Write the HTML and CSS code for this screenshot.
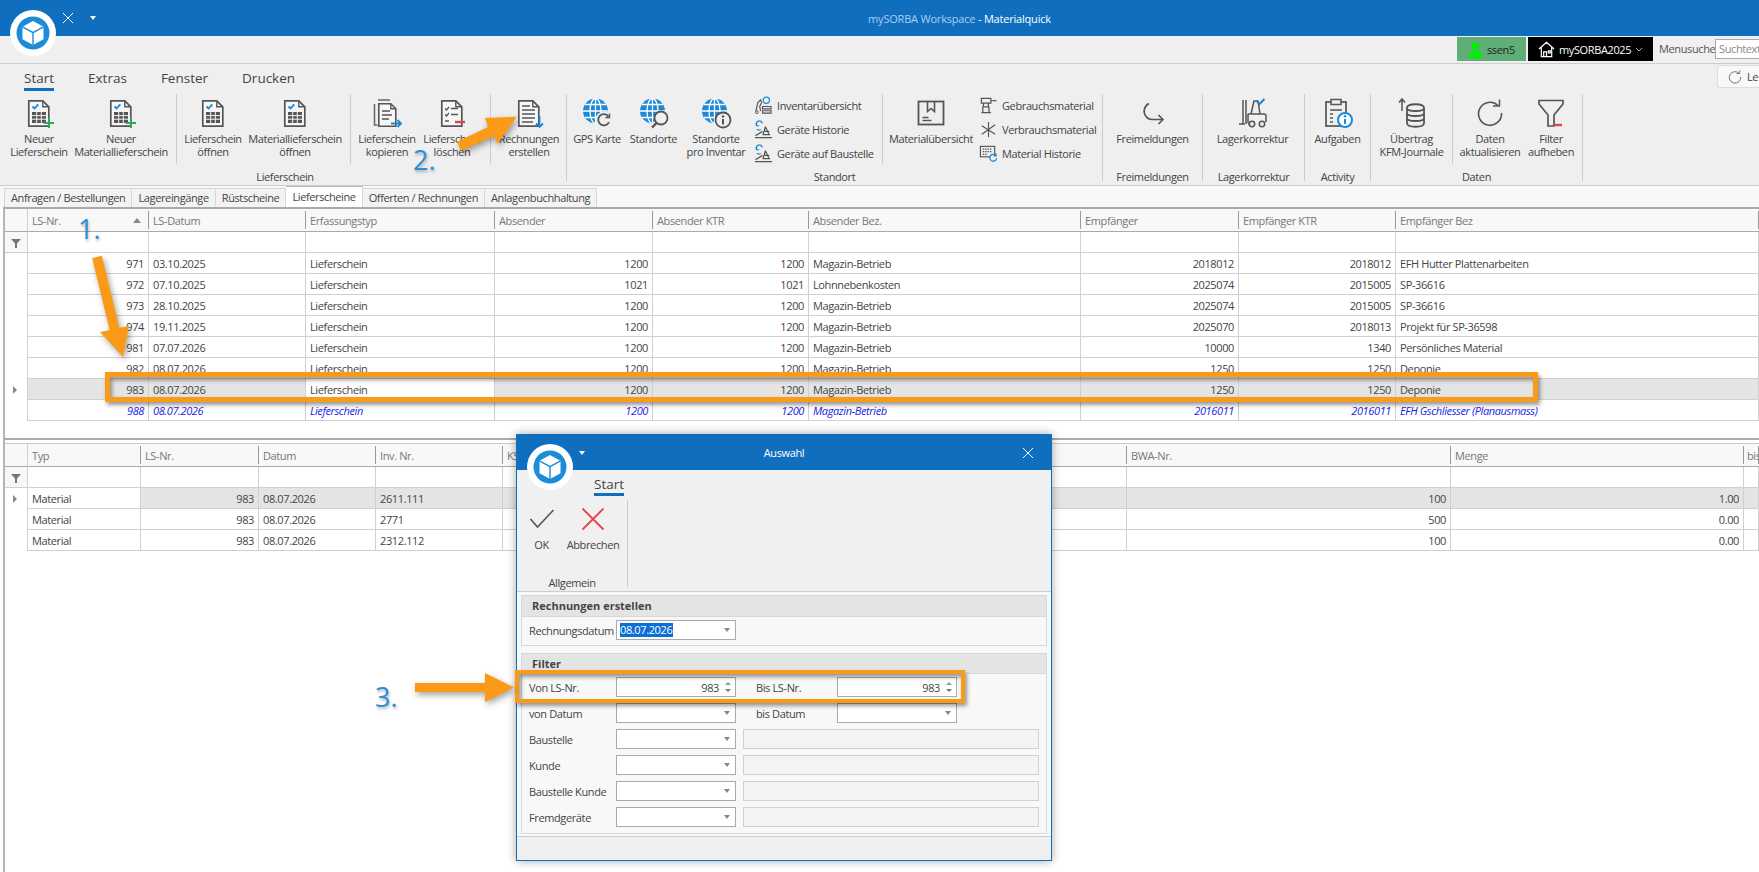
FILE: index.html
```html
<!DOCTYPE html>
<html lang="de">
<head>
    <meta charset="UTF-8">
    <meta name="viewport" content="width=device-width, initial-scale=1.0">
    <title>mySORBA Workspace - Materialquick</title>
    <link rel="stylesheet" href="styles.css">
</head>
<body>
    <svg class="sprite" xmlns="http://www.w3.org/2000/svg">
        <symbol id="logo" viewBox="0 0 46 46">
            <circle cx="23" cy="23" r="23" fill="#fff"/>
            <circle cx="23" cy="23" r="16.5" fill="#1c8bd8"/>
            <path d="M23 11l10.5 5.8v12.4L23 35l-10.5-5.8V16.8z" fill="#fff"/>
            <path d="M12.5 16.8L23 22.6l10.5-5.8M23 22.6V35" fill="none" stroke="#1c8bd8" stroke-width="1.4"/>
        </symbol>
        <symbol id="doc" viewBox="0 0 32 32">
            <path d="M5.8 3.8h14l6 6v19.4h-20z" fill="#f6f6f6" stroke="#555" stroke-width="1.7"/>
            <path d="M19.8 3.8v6h6" fill="none" stroke="#555" stroke-width="1.4"/>
        </symbol>
        <symbol id="doc-grid" viewBox="0 0 32 32">
            <use href="#doc"/>
            <path d="M9.5 9.5l2 2 3.8-4.2" fill="none" stroke="#1d86cf" stroke-width="1.8"/>
            <rect x="9" y="15" width="14" height="11" fill="#555"/>
            <path d="M9 18.6h14M9 22.2h14M13.7 15v11M18.3 15v11" stroke="#f6f6f6"/>
        </symbol>
        <symbol id="doc-grid-plus" viewBox="0 0 32 32">
            <use href="#doc-grid"/>
            <path d="M26 21v10M21 26h10" stroke="#2fa84f" stroke-width="2"/>
        </symbol>
        <symbol id="doc-copy" viewBox="0 0 32 32">
            <path d="M3.5 7v21h3M7 3h12" fill="none" stroke="#666" stroke-width="1.5"/>
            <path d="M7.8 6.8h12l5 5v17.4h-17z" fill="#f6f6f6" stroke="#555" stroke-width="1.6"/>
            <path d="M19.8 6.8v5h5M11 14h8M11 18h10M11 22h7" fill="none" stroke="#555" stroke-width="1.4"/>
            <path d="M20 26.5h10M26.5 23l3.5 3.5-3.5 3.5" fill="none" stroke="#1d86cf" stroke-width="1.8"/>
        </symbol>
        <symbol id="doc-del" viewBox="0 0 32 32">
            <use href="#doc"/>
            <path d="M9 11.5l1.5 1.5 2.5-3M15 11.5h7M9 17.5l1.5 1.5 2.5-3M15 17.5h7M9 24h4" fill="none" stroke="#555" stroke-width="1.4"/>
            <path d="M19 25h10" stroke="#e8434b" stroke-width="2.4"/>
        </symbol>
        <symbol id="doc-down" viewBox="0 0 32 32">
            <use href="#doc"/>
            <path d="M9 9h8M9 13h13M9 17h13M9 21h13M9 25h11" fill="none" stroke="#555" stroke-width="1.5"/>
            <path d="M26.500 19v11M23 26.500l3.500 3.500 3.500-3.500" fill="none" stroke="#1d86cf" stroke-width="1.8"/>
        </symbol>
        <symbol id="globe" viewBox="0 0 32 32">
            <circle cx="14.500" cy="14" r="12.500" fill="#1e8ad6"/>
            <ellipse cx="14.500" cy="14" rx="5.500" ry="12.500" fill="none" stroke="#fff" stroke-width="1.300"/>
            <path d="M14.500 1.500v25M2 14h25M4 7.500h21M4 20.500h21" fill="none" stroke="#fff" stroke-width="1.300"/>
        </symbol>
        <symbol id="globe-sync" viewBox="0 0 32 32">
            <use href="#globe"/>
            <circle cx="23" cy="23" r="8.500" fill="#efefef"/>
            <path d="M28 25a5.600 5.600 0 1 1 -.6-5.500" fill="none" stroke="#555" stroke-width="1.800"/>
            <path d="M28.500 16.500v4h-4" fill="none" stroke="#555" stroke-width="1.500"/>
        </symbol>
        <symbol id="globe-find" viewBox="0 0 32 32">
            <use href="#globe"/>
            <circle cx="23" cy="21" r="6.500" fill="#efefef" stroke="#555" stroke-width="1.800"/>
            <path d="M18.500 26l-4.500 4.500" stroke="#555" stroke-width="2.400"/>
        </symbol>
        <symbol id="globe-info" viewBox="0 0 32 32">
            <use href="#globe"/>
            <circle cx="23" cy="23" r="7.500" fill="#efefef" stroke="#555" stroke-width="1.800"/>
            <path d="M23 22v5.500" stroke="#555" stroke-width="2"/>
            <circle cx="23" cy="19.500" r="1.200" fill="#555"/>
        </symbol>
        <symbol id="inv" viewBox="0 0 20 20">
            <circle cx="13" cy="4.500" r="3.300" fill="#eaf4fb" stroke="#1d86cf" stroke-width="1.300"/>
            <path d="M2 16l2-9 3-3 1 3-2 4 1 5M9 11h9v2.500H9zM9 15.500h9V18H9z" fill="none" stroke="#555" stroke-width="1.200"/>
            <circle cx="3" cy="17" r="1.500" fill="none" stroke="#555"/>
        </symbol>
        <symbol id="machine" viewBox="0 0 20 20">
            <path d="M8.500 3.500a3 3 0 1 0 -5.500 2" fill="none" stroke="#1d86cf" stroke-width="1.400"/>
            <path d="M2.500 3v3h3M3 9.500a3 3 0 0 0 4 .5" fill="none" stroke="#1d86cf" stroke-width="1.200"/>
            <path d="M1 18.500h18M12 7l-2.500 8.500M12 7l4 8.500M10 12h6M9 15.500h8M1.500 16.500L9 12" fill="none" stroke="#555" stroke-width="1.300"/>
        </symbol>
        <symbol id="box" viewBox="0 0 32 32">
            <rect x="3.500" y="4.500" width="25" height="23" fill="none" stroke="#555" stroke-width="1.800"/>
            <path d="M12.500 4.500v10l3.500-3 3.500 3v-10" fill="none" stroke="#555" stroke-width="1.600"/>
            <path d="M7.500 20.500h6M7.500 23.500h9" stroke="#555" stroke-width="1.400"/>
        </symbol>
        <symbol id="drill" viewBox="0 0 20 20">
            <path d="M2.500 2.500h10v5h-10zM5 7.500l-.8 4h6l-.8-4M4 11.500v6M10.500 11.500v6M2.500 17.500h10M12.500 5h3M15.500 4.500l3 .5" fill="none" stroke="#555" stroke-width="1.300"/>
        </symbol>
        <symbol id="spark" viewBox="0 0 20 20">
            <path d="M10 2v16M3 6l14 9M17 5L3 15" fill="none" stroke="#555" stroke-width="1.200"/>
        </symbol>
        <symbol id="kbd" viewBox="0 0 20 20">
            <rect x="1.500" y="2.500" width="15" height="11" fill="none" stroke="#555" stroke-width="1.200"/>
            <path d="M4 5.500h10M4 8h10M4 11h5" stroke="#555" stroke-width="1.300" stroke-dasharray="1.500 1"/>
            <path d="M18.500 15a3.600 3.600 0 1 1 -1-3M18 10v2.500h-2.500" fill="#efefef" stroke="#1d86cf" stroke-width="1.300"/>
        </symbol>
        <symbol id="release" viewBox="0 0 32 32">
            <path d="M12 6.500a8.500 8.500 0 0 0 -3 13c1.500 2 4 3 6 3h11" fill="none" stroke="#555" stroke-width="1.600"/>
            <path d="M21.500 18l4.500 4.500-4.500 4.500" fill="none" stroke="#555" stroke-width="1.600"/>
        </symbol>
        <symbol id="forklift" viewBox="0 0 32 32">
            <path d="M6 3v24M9 3v24M2 27h6" fill="none" stroke="#555" stroke-width="1.500"/>
            <path d="M11 27h3M14 17l3-13h4l2 13M11 17h16a2 2 0 0 1 2 2v6M11 17v9" fill="none" stroke="#555" stroke-width="1.500"/>
            <circle cx="15" cy="27" r="2.700" fill="#efefef" stroke="#555" stroke-width="1.500"/>
            <circle cx="25" cy="27" r="2.700" fill="#efefef" stroke="#555" stroke-width="1.500"/>
            <path d="M20 4.500l2.500 2.500 5-5" fill="none" stroke="#1d86cf" stroke-width="2"/>
        </symbol>
        <symbol id="tasks" viewBox="0 0 32 32">
            <rect x="4" y="5" width="20" height="24" fill="none" stroke="#555" stroke-width="1.700"/>
            <rect x="9" y="2.500" width="10" height="5" fill="#efefef" stroke="#555" stroke-width="1.500"/>
            <path d="M8 13h12M8 17h3M8 21h3M8 25h3" stroke="#555" stroke-width="1.500"/>
            <circle cx="23" cy="23" r="7" fill="#fff" stroke="#1e8ad6" stroke-width="2"/>
            <path d="M23 22v5" stroke="#1e8ad6" stroke-width="2"/>
            <circle cx="23" cy="19.300" r="1.200" fill="#1e8ad6"/>
        </symbol>
        <symbol id="db" viewBox="0 0 32 32">
            <path d="M11 11c0-5 17-5 17 0v15c0 5-17 5-17 0z" fill="none" stroke="#555" stroke-width="1.800"/>
            <path d="M11 11c0 4 17 4 17 0M11 16c0 4 17 4 17 0M11 21c0 4 17 4 17 0" fill="none" stroke="#555" stroke-width="1.800"/>
            <path d="M6 14V2M3 5.500L6 2l3 3.500" fill="none" stroke="#555" stroke-width="1.500"/>
        </symbol>
        <symbol id="sync" viewBox="0 0 32 32">
            <path d="M24 8.500A11.500 11.500 0 1 0 27.500 16" fill="none" stroke="#555" stroke-width="1.600"/>
            <path d="M25.500 2.500v6.500H19" fill="none" stroke="#555" stroke-width="1.500"/>
        </symbol>
        <symbol id="funnel" viewBox="0 0 32 32">
            <path d="M4 3.500h24v3.500l-9 11v11h-6V18L4 7z" fill="none" stroke="#555" stroke-width="1.700"/>
            <path d="M19 28h8" stroke="#e8434b" stroke-width="2.400"/>
        </symbol>
        <symbol id="ok" viewBox="0 0 32 32">
            <path d="M4.500 16l7 8L27.500 7" fill="none" stroke="#555" stroke-width="1.600"/>
        </symbol>
        <symbol id="cancel" viewBox="0 0 32 32">
            <path d="M5.500 5.500l21 21M26.500 5.500l-21 21" fill="none" stroke="#e8434b" stroke-width="1.800"/>
        </symbol>
        <symbol id="close" viewBox="0 0 12 12">
            <path d="M1 1l10 10M11 1L1 11" fill="none" stroke="#fff" stroke-width="1"/>
        </symbol>
    </svg>

    <header class="titlebar">
        <div class="qat">
            <svg class="qat-x"><use href="#close"/></svg>
            <span class="caret caret-white"></span>
        </div>
        <div class="app-title"><span class="app-name">mySORBA Workspace</span> - Materialquick</div>
    </header>

    <div class="status-strip">
        <div class="user-badge">
            <svg class="user-icon" viewBox="0 0 16 18"><circle cx="8" cy="5" r="4" fill="#00f000"/><path d="M1 18c0-6 3-8 7-8s7 2 7 8z" fill="#00f000"/></svg>
            ssen5
        </div>
        <div class="db-badge">
            <svg class="house-icon" viewBox="0 0 18 18"><path d="M1 9l8-7 8 7M3.500 7.500V17h11V7.500M6 17v-5h3v5M11 11h2v2h-2z" fill="none" stroke="#fff" stroke-width="1.300"/></svg>
            mySORBA2025
            <svg class="chev" viewBox="0 0 8 5"><path d="M1 1l3 3 3-3" fill="none" stroke="#aaa"/></svg>
        </div>
        <span class="search-label">Menusuche</span>
        <div class="search-box">Suchtext</div>
    </div>

    <section class="ribbon">
        <div class="ribbon-tabs">
            <span class="rtab rtab-on">Start</span>
            <span class="rtab">Extras</span>
            <span class="rtab">Fenster</span>
            <span class="rtab">Drucken</span>
            <div class="layout-btn">
                <svg class="layout-icon"><use href="#sync"/></svg>
                Le
            </div>
        </div>
        <div class="ribbon-body">
            <div class="rb-group w-563">
                <div class="rb-stage">
                    <div class="rb-section sec-pad8">
                        <div class="rb-btn w-70"><svg class="ico"><use href="#doc-grid-plus"/></svg><span>Neuer<br>Lieferschein</span></div>
                        <div class="rb-btn w-94"><svg class="ico"><use href="#doc-grid-plus"/></svg><span>Neuer<br>Materiallieferschein</span></div>
                    </div>
                    <div class="rb-section sec-pad9">
                        <div class="rb-btn w-72"><svg class="ico"><use href="#doc-grid"/></svg><span>Lieferschein<br>öffnen</span></div>
                        <div class="rb-btn w-92"><svg class="ico"><use href="#doc-grid"/></svg><span>Materiallieferschein<br>öffnen</span></div>
                    </div>
                    <div class="rb-section sec-pad9">
                        <div class="rb-btn w-72"><svg class="ico"><use href="#doc-copy"/></svg><span>Lieferschein<br>kopieren</span></div>
                        <div class="rb-btn w-58"><svg class="ico"><use href="#doc-del"/></svg><span>Lieferschein<br>löschen</span></div>
                    </div>
                    <div class="rb-btn w-76"><svg class="ico"><use href="#doc-down"/></svg><span>Rechnungen<br>erstellen</span></div>
                </div>
                <div class="rb-label">Lieferschein</div>
            </div>
            <div class="rb-group w-536">
                <div class="rb-stage">
                    <div class="rb-section">
                        <div class="rb-btn w-60"><svg class="ico"><use href="#globe-sync"/></svg><span>GPS Karte</span></div>
                        <div class="rb-btn w-53"><svg class="ico"><use href="#globe-find"/></svg><span>Standorte</span></div>
                        <div class="rb-btn w-72"><svg class="ico"><use href="#globe-info"/></svg><span>Standorte<br>pro Inventar</span></div>
                        <div class="rb-list list-a">
                            <div class="rb-item"><svg class="ico-s"><use href="#inv"/></svg>Inventarübersicht</div>
                            <div class="rb-item"><svg class="ico-s"><use href="#machine"/></svg>Geräte Historie</div>
                            <div class="rb-item"><svg class="ico-s"><use href="#machine"/></svg>Geräte auf Baustelle</div>
                        </div>
                    </div>
                    <div class="rb-btn w-96"><svg class="ico"><use href="#box"/></svg><span>Materialübersicht</span></div>
                    <div class="rb-list">
                        <div class="rb-item"><svg class="ico-s"><use href="#drill"/></svg>Gebrauchsmaterial</div>
                        <div class="rb-item"><svg class="ico-s"><use href="#spark"/></svg>Verbrauchsmaterial</div>
                        <div class="rb-item"><svg class="ico-s"><use href="#kbd"/></svg>Material Historie</div>
                    </div>
                </div>
                <div class="rb-label">Standort</div>
            </div>
            <div class="rb-group w-100">
                <div class="rb-stage"><div class="rb-btn w-99"><svg class="ico"><use href="#release"/></svg><span>Freimeldungen</span></div></div>
                <div class="rb-label">Freimeldungen</div>
            </div>
            <div class="rb-group w-102">
                <div class="rb-stage"><div class="rb-btn w-99"><svg class="ico"><use href="#forklift"/></svg><span>Lagerkorrektur</span></div></div>
                <div class="rb-label">Lagerkorrektur</div>
            </div>
            <div class="rb-group w-66">
                <div class="rb-stage"><div class="rb-btn w-65"><svg class="ico"><use href="#tasks"/></svg><span>Aufgaben</span></div></div>
                <div class="rb-label">Activity</div>
            </div>
            <div class="rb-group w-212">
                <div class="rb-stage">
                    <div class="rb-section">
                        <div class="rb-btn w-81"><svg class="ico"><use href="#db"/></svg><span>Übertrag<br>KFM-Journale</span></div>
                    </div>
                    <div class="rb-btn w-74"><svg class="ico"><use href="#sync"/></svg><span>Daten<br>aktualisieren</span></div>
                    <div class="rb-btn w-48"><svg class="ico"><use href="#funnel"/></svg><span>Filter<br>aufheben</span></div>
                </div>
                <div class="rb-label">Daten</div>
            </div>
        </div>
    </section>

    <nav class="doc-tabs">
        <span class="doc-tab">Anfragen / Bestellungen</span>
        <span class="doc-tab">Lagereingänge</span>
        <span class="doc-tab">Rüstscheine</span>
        <span class="doc-tab doc-tab-on">Lieferscheine</span>
        <span class="doc-tab">Offerten / Rechnungen</span>
        <span class="doc-tab">Anlagenbuchhaltung</span>
    </nav>

    <section class="pane pane-top">
        <table class="grid grid-top">
            <colgroup>
                <col class="c23"><col class="c121"><col class="c157"><col class="c189"><col class="c158"><col class="c156"><col class="c272"><col class="c158"><col class="c157"><col class="c363">
            </colgroup>
            <thead>
                <tr><th class="ind"></th><th>LS-Nr.<span class="sort-up"></span></th><th>LS-Datum</th><th>Erfassungstyp</th><th>Absender</th><th>Absender KTR</th><th>Absender Bez.</th><th>Empfänger</th><th>Empfänger KTR</th><th>Empfänger Bez</th></tr>
            </thead>
            <tbody>
                <tr><td class="ind ind-filter"><svg class="filter-icon" viewBox="0 0 10 10"><path d="M0 1h10L6 5.500V10H4V5.500z" fill="#777"/></svg></td><td></td><td></td><td></td><td></td><td></td><td></td><td></td><td></td><td></td></tr>
                <tr><td class="ind"></td><td class="num">971</td><td>03.10.2025</td><td>Lieferschein</td><td class="num">1200</td><td class="num">1200</td><td>Magazin-Betrieb</td><td class="num">2018012</td><td class="num">2018012</td><td>EFH Hutter Plattenarbeiten</td></tr>
                <tr><td class="ind"></td><td class="num">972</td><td>07.10.2025</td><td>Lieferschein</td><td class="num">1021</td><td class="num">1021</td><td>Lohnnebenkosten</td><td class="num">2025074</td><td class="num">2015005</td><td>SP-36616</td></tr>
                <tr><td class="ind"></td><td class="num">973</td><td>28.10.2025</td><td>Lieferschein</td><td class="num">1200</td><td class="num">1200</td><td>Magazin-Betrieb</td><td class="num">2025074</td><td class="num">2015005</td><td>SP-36616</td></tr>
                <tr><td class="ind"></td><td class="num">974</td><td>19.11.2025</td><td>Lieferschein</td><td class="num">1200</td><td class="num">1200</td><td>Magazin-Betrieb</td><td class="num">2025070</td><td class="num">2018013</td><td>Projekt für SP-36598</td></tr>
                <tr><td class="ind"></td><td class="num">981</td><td>07.07.2026</td><td>Lieferschein</td><td class="num">1200</td><td class="num">1200</td><td>Magazin-Betrieb</td><td class="num">10000</td><td class="num">1340</td><td>Persönliches Material</td></tr>
                <tr><td class="ind"></td><td class="num">982</td><td>08.07.2026</td><td>Lieferschein</td><td class="num">1200</td><td class="num">1200</td><td>Magazin-Betrieb</td><td class="num">1250</td><td class="num">1250</td><td>Deponie</td></tr>
                <tr class="sel"><td class="ind"><span class="row-mark"></span></td><td class="num">983</td><td>08.07.2026</td><td class="focus">Lieferschein</td><td class="num">1200</td><td class="num">1200</td><td>Magazin-Betrieb</td><td class="num">1250</td><td class="num">1250</td><td>Deponie</td></tr>
                <tr class="open"><td class="ind"></td><td class="num">988</td><td>08.07.2026</td><td>Lieferschein</td><td class="num">1200</td><td class="num">1200</td><td>Magazin-Betrieb</td><td class="num">2016011</td><td class="num">2016011</td><td>EFH Gschliesser (Planausmass)</td></tr>
            </tbody>
        </table>
    </section>

    <section class="pane pane-bottom">
        <table class="grid grid-bottom">
            <colgroup>
                <col class="c23"><col class="c113"><col class="c118"><col class="c117"><col class="c127"><col class="c624"><col class="c324"><col class="c293"><col class="c15">
            </colgroup>
            <thead>
                <tr><th class="ind"></th><th>Typ</th><th>LS-Nr.</th><th>Datum</th><th>Inv. Nr.</th><th>KS</th><th>BWA-Nr.</th><th>Menge</th><th class="last">bis</th></tr>
            </thead>
            <tbody>
                <tr><td class="ind ind-filter"><svg class="filter-icon" viewBox="0 0 10 10"><path d="M0 1h10L6 5.500V10H4V5.500z" fill="#777"/></svg></td><td></td><td></td><td></td><td></td><td></td><td></td><td></td><td></td></tr>
                <tr class="sel"><td class="ind"><span class="row-mark"></span></td><td class="focus">Material</td><td class="num">983</td><td>08.07.2026</td><td>2611.111</td><td></td><td class="num">100</td><td class="num">1.00</td><td></td></tr>
                <tr><td class="ind"></td><td>Material</td><td class="num">983</td><td>08.07.2026</td><td>2771</td><td></td><td class="num">500</td><td class="num">0.00</td><td></td></tr>
                <tr><td class="ind"></td><td>Material</td><td class="num">983</td><td>08.07.2026</td><td>2312.112</td><td></td><td class="num">100</td><td class="num">0.00</td><td></td></tr>
            </tbody>
        </table>
    </section>

    <svg class="logo logo-main"><use href="#logo"/></svg>

    <!-- Auswahl dialog -->
    <div class="dialog">
        <div class="dlg-title">
            <span class="caret caret-white dlg-caret"></span>
            <span class="dlg-title-text">Auswahl</span>
            <svg class="dlg-close"><use href="#close"/></svg>
        </div>
        <div class="dlg-ribbon">
            <div class="dlg-tabs"><span class="rtab rtab-on">Start</span></div>
            <div class="rb-group w-111">
                <div class="rb-stage dlg-stage">
                    <div class="rb-btn w-45"><svg class="ico"><use href="#ok"/></svg><span>OK</span></div>
                    <div class="rb-btn w-58"><svg class="ico"><use href="#cancel"/></svg><span>Abbrechen</span></div>
                </div>
                <div class="rb-label">Allgemein</div>
            </div>
        </div>
        <div class="dlg-body">
            <div class="panel">
                <div class="panel-head">Rechnungen erstellen</div>
                <div class="panel-body panel-date">
                    <div class="frow">
                        <label class="flabel">Rechnungsdatum</label>
                        <div class="field combo"><span class="picked">08.07.2026</span><span class="caret"></span></div>
                    </div>
                </div>
            </div>
            <div class="panel">
                <div class="panel-head panel-head-s">Filter</div>
                <div class="panel-body">
                    <div class="frow">
                        <label class="flabel">Von LS-Nr.</label>
                        <div class="field spin">983<span class="spin-btns"><i class="up"></i><i class="down"></i></span></div>
                        <label class="flabel flabel-2">Bis LS-Nr.</label>
                        <div class="field spin">983<span class="spin-btns"><i class="up"></i><i class="down"></i></span></div>
                    </div>
                    <div class="frow">
                        <label class="flabel">von Datum</label>
                        <div class="field combo"><span class="caret"></span></div>
                        <label class="flabel flabel-2">bis Datum</label>
                        <div class="field combo"><span class="caret"></span></div>
                    </div>
                    <div class="frow">
                        <label class="flabel">Baustelle</label>
                        <div class="field combo"><span class="caret"></span></div>
                        <div class="field-ro"></div>
                    </div>
                    <div class="frow">
                        <label class="flabel">Kunde</label>
                        <div class="field combo"><span class="caret"></span></div>
                        <div class="field-ro"></div>
                    </div>
                    <div class="frow">
                        <label class="flabel">Baustelle Kunde</label>
                        <div class="field combo"><span class="caret"></span></div>
                        <div class="field-ro"></div>
                    </div>
                    <div class="frow">
                        <label class="flabel">Fremdgeräte</label>
                        <div class="field combo"><span class="caret"></span></div>
                        <div class="field-ro"></div>
                    </div>
                </div>
            </div>
        </div>
        <div class="dlg-foot"></div>
    </div>
    <svg class="logo logo-dlg"><use href="#logo"/></svg>

    <!-- annotations drawn over the screenshot -->
    <div class="mark-box mark-row"></div>
    <div class="mark-box mark-lsnr"></div>
    <svg class="arrows" viewBox="0 0 1759 872">
        <polygon points="92.200,258.300 101.800,255.700 119.300,327.700 129,326 123,357 100,332 109.700,330.300"/>
        <polygon points="457,141.700 488,127 485,118 516.600,116.700 497.500,144 494,136 461,150.700"/>
        <polygon points="415,683 485,683 485,673 514,687.500 485,702 485,692 415,692"/>
    </svg>
    <span class="step step-1">1.</span>
    <span class="step step-2">2.</span>
    <span class="step step-3">3.</span>
</body>
</html>
```

FILE: styles.css
```css
* {
    box-sizing: border-box;
}

html, body {
    height: 100%;
}

body {
    margin: 0;
    width: 1759px;
    height: 872px;
    position: relative;
    overflow: hidden;
    background: #fff;
    color: #444;
    font-family: "Open Sans", "Noto Sans", sans-serif;
    font-size: 11px;
    letter-spacing: -0.38px;
}

.sprite {
    display: none;
}

/* title bar */
.titlebar {
    display: flex;
    align-items: center;
    height: 36px;
    background: #106ebe;
    color: #fff;
}

.qat {
    display: flex;
    align-items: center;
    gap: 16px;
    width: 160px;
    padding-left: 62px;
}

.qat-x {
    width: 12px;
    height: 12px;
}

.app-title {
    flex: 1;
    text-align: center;
    letter-spacing: -0.2px;
}

.app-name {
    color: #a9cff2;
}

.caret {
    display: block;
    width: 0;
    height: 0;
    border-left: 3.500px solid transparent;
    border-right: 3.500px solid transparent;
    border-top: 4px solid #888;
}

.caret-white {
    border-top-color: #fff;
}

.logo {
    position: absolute;
    width: 46px;
    height: 46px;
}

.logo-main {
    left: 10px;
    top: 10px;
}

.logo-dlg {
    left: 527px;
    top: 444px;
}

/* strip with user, database and menu search */
.status-strip {
    display: flex;
    justify-content: flex-end;
    align-items: flex-start;
    height: 27px;
    padding-top: 1px;
    background: #f0f0f0;
}

.user-badge,
.db-badge {
    display: flex;
    align-items: center;
    height: 24px;
}

.user-badge {
    gap: 4px;
    width: 69px;
    padding-left: 11px;
    margin-right: 2px;
    background: #5fae78;
    color: #222;
}

.user-icon {
    width: 15px;
    height: 17px;
}

.db-badge {
    width: 125px;
    padding-left: 10px;
    background: #000;
    color: #fff;
}

.house-icon {
    width: 17px;
    height: 18px;
    margin-right: 4px;
}

.chev {
    width: 8px;
    height: 5px;
    margin-left: 4px;
}

.search-label {
    margin-left: 6px;
    line-height: 24px;
    width: 56px;
    flex-shrink: 0;
    color: #555;
}

.search-box {
    flex-shrink: 0;
    width: 84px;
    height: 20px;
    margin: 2px -40px 0 0;
    padding-left: 3px;
    line-height: 18px;
    border: 1px solid #aaa;
    background: #fff;
    color: #888;
}

/* ribbon */
.ribbon {
    height: 123px;
    padding-left: 2px;
    background: #efefef;
    border-top: 1px solid #ccc;
    border-bottom: 1px solid #ccc;
}

.ribbon-tabs {
    display: flex;
    height: 30px;
    padding-left: 22px;
    gap: 34px;
}

.rtab {
    height: 27px;
    padding-top: 5px;
    font-size: 13.5px;
    letter-spacing: 0;
    line-height: 18px;
    color: #444;
}

.rtab-on {
    border-bottom: 3px solid #106ebe;
}

.layout-btn {
    display: flex;
    align-items: center;
    gap: 4px;
    flex-shrink: 0;
    width: 50px;
    height: 23px;
    margin: 1px -8px 0 auto;
    padding-left: 9px;
    background: #f8f8f8;
    border: 1px solid #ddd;
    border-radius: 2px;
}

.layout-icon {
    width: 16px;
    height: 16px;
}

.ribbon-body {
    display: flex;
    padding-left: 2px;
}

.rb-group {
    height: 87px;
    border-right: 1px solid #ccc;
}

.rb-stage {
    display: flex;
    height: 70px;
}

.rb-section {
    display: flex;
    height: 70px;
    border-right: 1px solid #ccc;
}

.sec-pad8 {
    padding-right: 8px;
}

.sec-pad9 {
    padding-right: 9px;
}

.rb-label {
    margin-top: 6px;
    height: 14px;
    line-height: 14px;
    text-align: center;
}

.rb-btn {
    display: flex;
    flex-direction: column;
    align-items: center;
    flex-shrink: 0;
    padding-top: 3px;
    text-align: center;
    white-space: nowrap;
    line-height: 13px;
}

.rb-btn span {
    margin-top: 3px;
}

.ico {
    display: block;
    width: 32px;
    height: 32px;
    flex-shrink: 0;
}

.rb-list {
    margin-top: -1px;
}

.list-a {
    width: 130px;
    padding-left: 2px;
}

.rb-item {
    display: flex;
    align-items: center;
    gap: 4px;
    height: 24px;
    white-space: nowrap;
}

.ico-s {
    width: 19px;
    height: 19px;
    flex-shrink: 0;
}

.w-45 { width: 45px; }
.w-48 { width: 48px; }
.w-53 { width: 53px; }
.w-58 { width: 58px; }
.w-60 { width: 60px; }
.w-65 { width: 65px; }
.w-66 { width: 66px; }
.w-70 { width: 70px; }
.w-72 { width: 72px; }
.w-74 { width: 74px; }
.w-76 { width: 76px; }
.w-81 { width: 81px; }
.w-92 { width: 92px; }
.w-94 { width: 94px; }
.w-96 { width: 96px; }
.w-99 { width: 99px; }
.w-100 { width: 100px; }
.w-102 { width: 102px; }
.w-111 { width: 111px; }
.w-212 { width: 212px; }
.w-536 { width: 536px; }
.w-563 { width: 563px; }

/* document tabs */
.doc-tabs {
    display: flex;
    align-items: flex-end;
    height: 21px;
    padding-left: 4px;
    background: #f8f8f8;
}

.doc-tab {
    height: 19px;
    padding: 0 6px;
    line-height: 18px;
    background: #f3f3f3;
    border: 1px solid #d5d5d5;
    border-bottom: 0;
    border-left-width: 0;
    white-space: nowrap;
}

.doc-tab:first-child {
    border-left-width: 1px;
}

.doc-tab-on {
    height: 21px;
    padding-top: 1px;
    background: #fff;
    border-top: 1px solid #bbb;
}

/* grids */
.pane {
    margin-left: 3px;
    border-left: 2px solid #b5b5b5;
    border-top: 2px solid #aaa;
    overflow: hidden;
}

.pane-top {
    height: 231px;
}

.pane-bottom {
    height: 434px;
    padding-top: 3px;
}

.grid {
    table-layout: fixed;
    width: 1754px;
    border-collapse: separate;
    border-spacing: 0;
}

.c15 { width: 15px; }
.c23 { width: 23px; }
.c113 { width: 113px; }
.c117 { width: 117px; }
.c118 { width: 118px; }
.c121 { width: 121px; }
.c127 { width: 127px; }
.c156 { width: 156px; }
.c157 { width: 157px; }
.c158 { width: 158px; }
.c189 { width: 189px; }
.c272 { width: 272px; }
.c293 { width: 293px; }
.c324 { width: 324px; }
.c363 { width: 363px; }
.c624 { width: 624px; }

.grid th {
    height: 23px;
    padding: 0 4px;
    font-weight: normal;
    text-align: left;
    color: #777;
    background: linear-gradient(#9a9a9a, #9a9a9a) right 2px / 1px 18px no-repeat, #f8f8f8;
    border-bottom: 1px solid #aaa;
    white-space: nowrap;
    overflow: hidden;
}

.grid th.ind {
    background: #f8f8f8;
    border-right: 1px solid #d0d0d0;
}

.grid th.last {
    padding: 0 0 0 3px;
}

.grid-bottom th {
    height: 24px;
    border-top: 1px solid #ccc;
}

.grid td {
    height: 21px;
    padding: 0 4px;
    border-right: 1px solid #d0d0d0;
    border-bottom: 1px solid #d0d0d0;
    white-space: nowrap;
    overflow: hidden;
}

.grid td.ind {
    padding: 0;
    border-bottom: 0;
    background: #fff;
}

.grid td.ind-filter {
    border-bottom: 1px solid #d0d0d0;
    background: #f8f8f8;
    text-align: center;
}

.filter-icon {
    display: block;
    width: 10px;
    height: 10px;
    margin: 1px auto 0;
}

.grid td.num {
    text-align: right;
}

.sel td {
    background: #e4e4e4;
}

.grid .sel td.focus {
    background: #fff;
}

.open td {
    color: #1a1ae6;
    font-style: italic;
}

.sort-up {
    float: right;
    width: 0;
    height: 0;
    margin: 5px 4px 0 0;
    border-left: 4.500px solid transparent;
    border-right: 4.500px solid transparent;
    border-bottom: 5px solid #888;
}

.row-mark {
    display: block;
    width: 0;
    height: 0;
    margin-left: 8px;
    border-top: 4px solid transparent;
    border-bottom: 4px solid transparent;
    border-left: 4px solid #888;
}

/* dialog */
.dialog {
    position: absolute;
    left: 516px;
    top: 434px;
    width: 536px;
    height: 427px;
    display: flex;
    flex-direction: column;
    background: #f0f0f0;
    border: 1px solid #106ebe;
    border-top: 0;
    box-shadow: 0 0 9px rgba(0, 0, 0, 0.35);
}

.dlg-title {
    display: flex;
    align-items: center;
    justify-content: center;
    height: 36px;
    background: #106ebe;
    color: #fff;
}

.dlg-caret {
    position: absolute;
    left: 62px;
    top: 17px;
}

.dlg-close {
    position: absolute;
    right: 17px;
    top: 13px;
    width: 12px;
    height: 12px;
}

.dlg-ribbon {
    height: 122px;
    background: #f0f0f0;
    border-bottom: 1px solid #ccc;
}

.dlg-tabs {
    display: flex;
    height: 30px;
    padding-left: 77px;
}

.dlg-tabs .rtab {
    height: 26px;
    padding-top: 5px;
}

.dlg-stage {
    padding-left: 2px;
}

.dlg-body {
    display: flex;
    flex-direction: column;
    gap: 7px;
    height: 245px;
    padding: 3px 4px 0;
    background: #f8f8f8;
    border-bottom: 1px solid #ccc;
}

.dlg-foot {
    flex: 1;
    background: #efefef;
}

.panel {
    border: 1px solid #d8d8d8;
    background: #f8f8f8;
}

.panel-head {
    height: 21px;
    padding-left: 10px;
    line-height: 20px;
    font-weight: bold;
    letter-spacing: 0;
    background: #e4e4e4;
    border-bottom: 1px solid #d8d8d8;
}

.panel-head-s {
    height: 20px;
    line-height: 19px;
}

.panel-date {
    height: 28px;
    padding-top: 2px;
}

.panel-body {
    padding: 3px 7px 6px;
}

.panel-body .frow + .frow {
    margin-top: 6px;
}

.frow {
    display: flex;
    align-items: center;
    height: 20px;
}

.flabel {
    width: 87px;
    flex-shrink: 0;
    white-space: nowrap;
}

.flabel-2 {
    width: 81px;
    margin-left: 20px;
}

.field {
    display: flex;
    align-items: center;
    justify-content: flex-end;
    flex-shrink: 0;
    width: 120px;
    height: 20px;
    background: #fff;
    border: 1px solid #aaa;
    font-size: 11px;
}

.combo {
    padding-right: 5px;
}

.combo .picked {
    margin-right: auto;
    margin-left: 3px;
    background: #0a6fd6;
    color: #fff;
    padding: 0 1px 0 0;
    line-height: 14px;
}

.spin {
    padding-right: 4px;
}

.spin-btns {
    display: flex;
    flex-direction: column;
    gap: 4px;
    margin-left: 6px;
}

.spin-btns i {
    display: block;
    width: 0;
    height: 0;
    border-left: 3px solid transparent;
    border-right: 3px solid transparent;
}

.spin-btns .up {
    border-bottom: 3px solid #999;
}

.spin-btns .down {
    border-top: 3px solid #777;
}

.field-ro {
    flex-shrink: 0;
    width: 296px;
    height: 20px;
    margin-left: 7px;
    background: #f3f3f3;
    border: 1px solid #d0d0d0;
}

/* annotations */
.mark-box {
    position: absolute;
    border: 5px solid #fa9a17;
    box-shadow: 2px 3px 4px rgba(0, 0, 0, 0.4), inset 2px 3px 4px rgba(0, 0, 0, 0.4);
}

.mark-row {
    left: 105px;
    top: 372px;
    width: 1433px;
    height: 30px;
}

.mark-lsnr {
    left: 515px;
    top: 670px;
    width: 450px;
    height: 33px;
    border-width: 4px;
}

.arrows {
    position: absolute;
    left: 0;
    top: 0;
    width: 1759px;
    height: 872px;
    fill: #fa9a17;
    filter: drop-shadow(2px 3px 3px rgba(0, 0, 0, 0.35));
}

.step {
    position: absolute;
    color: #2a8fd8;
    font-size: 27px;
    line-height: 30px;
    letter-spacing: 0;
    text-shadow: 1px 2px 3px rgba(0, 0, 0, 0.3);
}

.step-1 {
    left: 78px;
    top: 214px;
}

.step-2 {
    left: 413px;
    top: 145px;
}

.step-3 {
    left: 375px;
    top: 682px;
}
```
